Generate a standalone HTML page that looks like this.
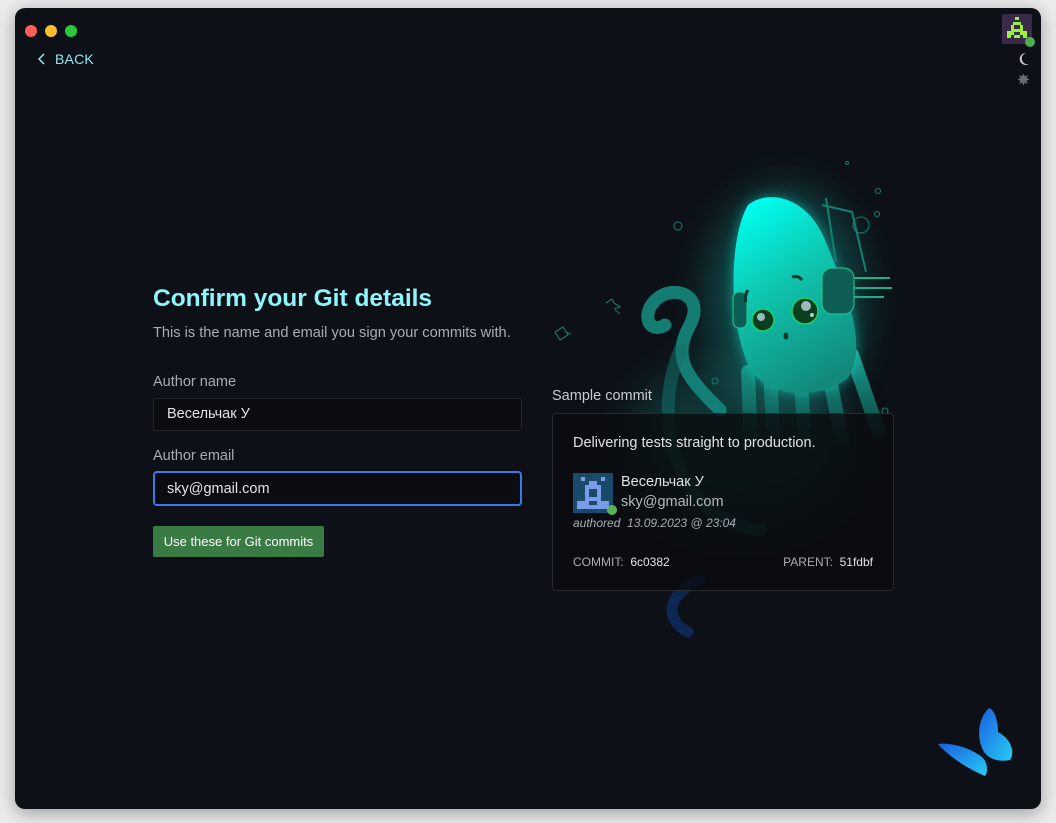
<!DOCTYPE html>
<html><head><meta charset="utf-8"><style>
html,body{margin:0;padding:0;width:1056px;height:823px;background:#ececec;overflow:hidden;font-family:"Liberation Sans","DejaVu Sans",sans-serif}
.win{position:absolute;left:15px;top:8px;width:1026px;height:801px;background:#0d1017;border-radius:10px;box-shadow:0 4px 18px rgba(0,0,0,.35);overflow:hidden}
.dot{position:absolute;top:17px;width:12px;height:12px;border-radius:50%}
.back{position:absolute;left:22px;top:43px;color:#8ee8f2;font-size:14px;letter-spacing:.2px}
h1{position:absolute;left:138px;top:277px;margin:0;color:#8ef6fb;font-size:24.5px;font-weight:bold}
.sub{position:absolute;left:138px;top:317px;color:#a9adb3;font-size:14.6px}
.lbl{position:absolute;left:138px;color:#a9adb3;font-size:14.5px}
.inp{position:absolute;left:138px;width:369px;height:33px;background:#0a0c10;border:1px solid #22262d;border-radius:3px;color:#e2e4e7;font-size:14.5px;box-sizing:border-box;padding:7px 13px}
.btn{position:absolute;left:138px;top:518px;width:171px;height:31px;background:#3a7a44;border-radius:2px;color:#fff;font-size:13px;line-height:31px;text-align:center}
.card{position:absolute;left:537px;top:405px;width:342px;height:178px;box-sizing:border-box;border:1px solid #262a31;border-radius:4px;background:rgba(10,12,16,.82)}
.card div{position:absolute}
</style></head><body>
<div class="win">
<div class="dot" style="left:10px;background:#fe5f57"></div>
<div class="dot" style="left:30px;background:#febc2e"></div>
<div class="dot" style="left:50px;background:#28c840"></div>
<div class="back"><svg width="10" height="12" style="vertical-align:-1px;margin-right:8px"><path d="M7 1 L2 6 L7 11" stroke="#8ee8f2" stroke-width="1.5" fill="none"/></svg>BACK</div>

<div style="position:absolute;left:987px;top:6px;width:30px;height:30px;background:#3a2a4a;border-radius:2px">
<svg width="30" height="30"><g fill="#9af03a"><rect x="13" y="3" width="4" height="3"/><rect x="11" y="8" width="8" height="3"/><rect x="9" y="11" width="3" height="10"/><rect x="18" y="11" width="3" height="10"/><rect x="12" y="15" width="6" height="3"/><rect x="5" y="17" width="4" height="7"/><rect x="21" y="17" width="4" height="7"/><rect x="12" y="21" width="6" height="3"/></g></svg></div>
<div style="position:absolute;left:1010px;top:29px;width:10px;height:10px;border-radius:50%;background:#4caf50"></div>
<svg style="position:absolute;left:1003px;top:44px" width="12" height="14"><path d="M8 1 A6 6 0 1 0 11 12 A5 5 0 0 1 8 1Z" fill="#c8c8cc"/></svg>
<svg style="position:absolute;left:1003px;top:66px" width="11" height="11"><circle cx="5.5" cy="5.5" r="3" fill="none" stroke="#6a6e75" stroke-width="2"/><path d="M5.5 0v11M0 5.5h11M1.5 1.5l8 8M9.5 1.5l-8 8" stroke="#6a6e75" stroke-width="1.2"/></svg>

<svg style="position:absolute;left:0;top:0" width="1026" height="801" viewBox="15 8 1026 801">
<defs>
<linearGradient id="head" x1="0.2" y1="0" x2="0.6" y2="1"><stop offset="0" stop-color="#00fff0"/><stop offset=".45" stop-color="#0fc4ad"/><stop offset="1" stop-color="#12897a"/></linearGradient>
<linearGradient id="tent" x1="0" y1="0" x2="0" y2="1"><stop offset="0" stop-color="#17a08f"/><stop offset=".6" stop-color="#126b62" stop-opacity=".7"/><stop offset="1" stop-color="#0d1017" stop-opacity="0"/></linearGradient>
<filter id="bl" x="-50%" y="-50%" width="200%" height="200%"><feGaussianBlur stdDeviation="22"/></filter>
<filter id="bl2" x="-50%" y="-50%" width="200%" height="200%"><feGaussianBlur stdDeviation="6"/></filter>
<linearGradient id="bf" x1="0" y1="0" x2="1" y2="1"><stop offset="0" stop-color="#1a5ee0"/><stop offset="1" stop-color="#26ccf4"/></linearGradient>
</defs>
<ellipse cx="785" cy="300" rx="75" ry="110" fill="#14c2ae" opacity=".35" filter="url(#bl)"/>
<ellipse cx="740" cy="440" rx="110" ry="80" fill="#127a70" opacity=".35" filter="url(#bl)"/>
<g fill="none" stroke="#167a70" stroke-width="1.1">
<circle cx="678" cy="226" r="4"/><circle cx="861" cy="225" r="8"/><circle cx="878" cy="191" r="2.5"/><circle cx="877" cy="214" r="2.5"/><circle cx="847" cy="163" r="1.5"/>
<path d="M606 303l6-4 2 4 6 4-6 2M615 310l5 4"/><path d="M555 332l8-5 5 8-8 5z M566 332l5 2"/>
<circle cx="715" cy="381" r="3"/><circle cx="885" cy="411" r="3"/>
</g>
<path d="M720 410 C690 380 670 360 690 325 C705 295 675 285 658 298 C640 312 648 335 665 325" fill="none" stroke="#15887c" stroke-width="13" stroke-linecap="round" opacity=".9"/>
<path d="M680 350 C660 400 665 460 700 500 C720 520 740 528 760 530" fill="none" stroke="#126f66" stroke-width="13" stroke-linecap="round" opacity=".55"/>
<path d="M700 580 C665 595 665 620 688 632" fill="none" stroke="#0c2752" stroke-width="11" stroke-linecap="round"/>
<path d="M770 370 L775 470 M800 375 L808 470 M828 370 L845 455 M852 355 L878 430 M748 372 L752 470" stroke="url(#tent)" stroke-width="14" stroke-linecap="round" fill="none"/>
<path d="M748 205 C770 188 808 198 825 240 C848 295 868 345 848 378 C820 400 772 398 752 372 C728 330 728 240 748 205Z" fill="#18e0d0" opacity=".5" filter="url(#bl2)"/>
<path d="M748 205 C770 188 808 198 825 240 C848 295 868 345 848 378 C820 400 772 398 752 372 C728 330 728 240 748 205Z" fill="url(#head)"/>
<path d="M826 198 L836 262 M822 205 L852 212 L866 272" fill="none" stroke="#13806f" stroke-width="2"/>
<rect x="822" y="268" width="32" height="46" rx="10" fill="#0f5e55" stroke="#1bd28f"/>
<path d="M854 278h36M854 288h38M854 297h30" stroke="#1ab08a" stroke-width="2"/>
<rect x="733" y="292" width="14" height="36" rx="6" fill="#0f5e55" stroke="#1bd28f"/>
<circle cx="805" cy="311" r="13" fill="#0a4020" stroke="#20d060" stroke-width="1.5"/><circle cx="806" cy="306" r="5" fill="#9bb"/><circle cx="812" cy="315" r="2" fill="#bcc"/>
<circle cx="763" cy="320" r="11" fill="#0a4020" stroke="#20d060" stroke-width="1.5"/><circle cx="761" cy="317" r="4" fill="#9bb"/>
<path d="M792 277 q6-2 10 3" stroke="#0a3a30" stroke-width="3" fill="none"/>
<path d="M748 290 q-4 6 -2 12" stroke="#0a3a30" stroke-width="3" fill="none"/>
<ellipse cx="786" cy="336" rx="2.5" ry="3.5" fill="#0a3a30"/>
<!-- butterfly -->
<path d="M989 708 C978 718 976 738 984 752 C990 760 1000 762 1010 760 C1016 752 1010 738 998 732 C998 722 995 710 989 708Z" fill="url(#bf)"/>
<path d="M938 744 C950 742 972 748 983 758 C988 764 988 772 985 776 C975 772 952 760 938 744Z" fill="url(#bf)"/>
<path d="M982 752 L990 768" stroke="#0a1a30" stroke-width="2"/>
</svg>

<h1>Confirm your Git details</h1>
<div class="sub">This is the name and email you sign your commits with.</div>
<div class="lbl" style="top:366px">Author name</div>
<div class="inp" style="top:390px">Весельчак У</div>
<div class="lbl" style="top:440px">Author email</div>
<div class="inp" style="top:463px;height:35px;border:2px solid #3b7be8;border-radius:4px;padding:8px 12px">sky@gmail.com</div>
<div class="btn">Use these for Git commits</div>

<div style="position:absolute;left:537px;top:380px;color:#c9ccd0;font-size:14.5px">Sample commit</div>
<div class="card">
<div style="left:20px;top:21px;color:#e0e2e5;font-size:14.5px">Delivering tests straight to production.</div>
<div style="left:20px;top:59px;width:40px;height:40px;background:#1a4a6a">
<svg width="40" height="40"><g fill="#7a9ce8"><rect x="8" y="4" width="4" height="4"/><rect x="28" y="4" width="4" height="4"/><rect x="16" y="8" width="8" height="4"/><rect x="12" y="12" width="16" height="4"/><rect x="12" y="16" width="4" height="20"/><rect x="24" y="16" width="4" height="20"/><rect x="16" y="24" width="8" height="4"/><rect x="4" y="28" width="8" height="8"/><rect x="28" y="28" width="8" height="8"/><rect x="16" y="32" width="8" height="4"/></g></svg></div>
<div style="left:54px;top:91px;width:10px;height:10px;border-radius:50%;background:#5ab35a"></div>
<div style="left:68px;top:60px;color:#dfe1e4;font-size:14.5px">Весельчак У</div>
<div style="left:68px;top:80px;color:#b5b8bd;font-size:14.5px">sky@gmail.com</div>
<div style="left:20px;top:102px;color:#a9adb3;font-size:12px;font-style:italic">authored&nbsp; 13.09.2023 @ 23:04</div>
<div style="left:20px;top:141px;color:#a9adb3;font-size:12px">COMMIT:&nbsp; <span style="color:#e0e2e5">6c0382</span></div>
<div style="right:20px;top:141px;color:#a9adb3;font-size:12px">PARENT:&nbsp; <span style="color:#e0e2e5">51fdbf</span></div>
</div>
</div>
</body></html>
